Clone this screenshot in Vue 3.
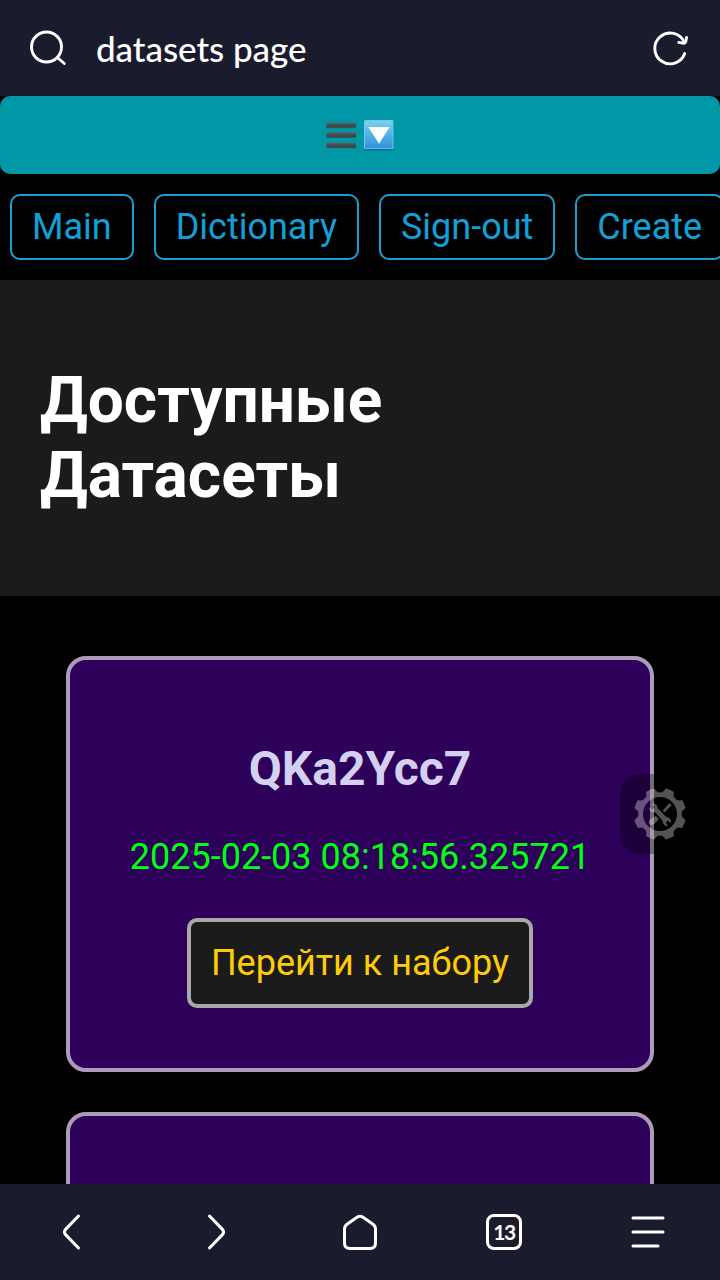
<script setup>
const links = ['Main', 'Dictionary', 'Sign-out', 'Create']
const teeth = Array.from({ length: 8 }, (_, i) => 22.5 + i * 45)
</script>

<template>
  <div class="screen">
    <header class="address">
      <svg class="search" viewBox="0 0 40 40" width="40" height="40">
        <circle cx="18.5" cy="19" r="15" />
        <path d="M30.5 30.5L36.3 35.5" />
      </svg>
      <span class="page-name">datasets page</span>
      <svg class="reload" viewBox="0 0 40 40" width="40" height="40">
        <path d="M34.7 25.6A15.4 15.4 0 1 1 34.2 14" />
        <path d="M28.8 14.4L33.8 15.2Q35.2 15.3 35.7 13.8L36.6 9.4" />
      </svg>
    </header>

    <main class="content">
      <div class="toggle">
        <svg viewBox="0 0 70 34" width="70" height="34">
          <defs>
            <linearGradient id="bar" x1="0" y1="0" x2="0" y2="1">
              <stop offset="0" stop-color="#56696d" />
              <stop offset=".3" stop-color="#465458" />
              <stop offset=".75" stop-color="#37464a" />
              <stop offset="1" stop-color="#3f5c60" />
            </linearGradient>
            <linearGradient id="tile" x1="0" y1="0" x2="0" y2="1">
              <stop offset="0" stop-color="#76d0ee" />
              <stop offset="1" stop-color="#2f93da" />
            </linearGradient>
          </defs>
          <rect x="1.5" y="4.7" width="29.5" height="5.5" rx=".8" fill="url(#bar)" />
          <rect x="1.5" y="14.2" width="29.5" height="5.7" rx=".8" fill="url(#bar)" />
          <rect x="1.5" y="24.7" width="29.5" height="5.5" rx=".8" fill="url(#bar)" />
          <rect x="39" y="3" width="29.5" height="29.3" rx="1.5" fill="#17679d" />
          <rect x="39" y="2" width="29.5" height="29" rx="1.5" fill="#73c8ec" />
          <rect x="40" y="3.2" width="27.5" height="27" rx="1" fill="url(#tile)" />
          <path d="M43.3 9H64.7L54 25.8Z" fill="#fff" />
        </svg>
      </div>

      <nav class="links">
        <a v-for="link in links" :key="link" class="link">{{ link }}</a>
      </nav>

      <section class="hero">
        <h1>Доступные<br>Датасеты</h1>
      </section>

      <section class="cards">
        <article class="card">
          <h2>QKa2Ycc7</h2>
          <p>2025-02-03 08:18:56.325721</p>
          <button class="open">Перейти к набору</button>
        </article>
        <article class="card"></article>
      </section>
    </main>

    <footer class="toolbar">
      <svg class="tool" viewBox="0 0 40 40">
        <path d="M26.5 4L13.3 17.6Q11.5 20 13.3 22.4L26.5 36" />
      </svg>
      <svg class="tool" viewBox="0 0 40 40">
        <path d="M13.5 4L26.7 17.6Q28.5 20 26.7 22.4L13.5 36" />
      </svg>
      <svg class="tool" viewBox="0 0 40 40">
        <path d="M17 5.2Q20 3.2 23 5.2L33 12.2Q35.5 14 35.5 17V31Q35.5 36.5 30 36.5H10Q4.5 36.5 4.5 31V17Q4.5 14 7 12.2Z" />
      </svg>
      <div class="tool tabs">13</div>
      <svg class="tool" viewBox="0 0 40 40">
        <path d="M5 6H35M5 20H35M5 34H30" />
      </svg>
    </footer>

    <div class="floating">
      <svg viewBox="-30 -30 60 60" width="60" height="60">
        <mask id="wrench-gap" maskUnits="userSpaceOnUse" x="-30" y="-30" width="60" height="60">
          <rect x="-30" y="-30" width="60" height="60" fill="#fff" />
          <path d="M-6-5L6 7" stroke="#000" stroke-width="7" />
        </mask>
        <g class="gear">
          <path v-for="angle in teeth" :key="angle" d="M-6.8-20.6Q-4.8-22-4.5-25.8Q0-26.6 4.5-25.8Q4.8-22 6.8-20.6Z" :transform="`rotate(${angle})`" />
          <circle r="19.4" fill="none" stroke="#fff" stroke-width="4.8" />
          <g mask="url(#wrench-gap)">
            <path d="M2.6-3.2L9.3-10.8L11.7-8.8L4.7-1.8Z" />
            <path d="M-3.5 1.5L-10.6 5.8Q-12.5 11-8.5 11.2Q-5.2 10.5-1 5Z" />
          </g>
          <path d="M-11-6.4Q-10.5-1.8-7-1.4L-4.8-1.8L2.6 6.7Q2.8 12 8 12.3L5.8 8.8L7.8 6.6L11.2 8.9Q11.2 3.6 6.2 3L-2.4-5.8Q-2.4-10.8-8.4-10.6L-5.2-7.1L-7.6-4.5Z" />
        </g>
      </svg>
    </div>
  </div>
</template>

<style>
body { background: #000; }
</style>

<style scoped>
.screen {
  position: relative;
  display: flex;
  flex-direction: column;
  width: 720px;
  height: 1280px;
  overflow: hidden;
  background: #000;
  font-family: Roboto, "Liberation Sans", sans-serif;
}
.address {
  flex: none;
  box-sizing: border-box;
  height: 96px;
  padding: 0 30px 0 28px;
  display: flex;
  align-items: center;
  background: #1b1b2e;
  color: #fff;
}
.search, .reload {
  fill: none;
  stroke: #fff;
  stroke-width: 2.9;
  stroke-linecap: round;
  stroke-linejoin: round;
}
.page-name {
  margin: 0 auto 0 28px;
  font: 500 35px/40px Lato, "Open Sans", sans-serif;
  letter-spacing: -0.05px;
}
.content {
  flex: 1;
  min-height: 0;
  overflow: hidden;
}
.toggle {
  height: 78px;
  display: flex;
  align-items: center;
  justify-content: center;
  border-radius: 10px;
  background: #0097a7;
}
.links {
  display: flex;
  gap: 20px;
  padding: 20px 10px;
}
.link {
  flex: none;
  padding: 10px 20px;
  border: 2px solid #1b9fd0;
  border-radius: 10px;
  color: #11a0d7;
  font-size: 36px;
  line-height: 42px;
}
.hero {
  box-sizing: border-box;
  height: 316px;
  padding: 83px 40px;
  background: #1b1b1b;
  color: #fff;
}
h1 {
  margin: 0;
  font-size: 64px;
  line-height: 75px;
}
.cards {
  display: flex;
  flex-direction: column;
  align-items: center;
  gap: 40px;
  padding-top: 60px;
}
.card {
  flex: none;
  box-sizing: border-box;
  width: 588px;
  height: 416px;
  padding-top: 80px;
  border: 4px solid #ac9bb9;
  border-radius: 20px;
  display: flex;
  flex-direction: column;
  align-items: center;
  background: #2d0059;
}
h2 {
  margin: 0;
  color: #d3d0f0;
  font-size: 48px;
  line-height: 57px;
}
p {
  margin: 39px 0 40px;
  color: #0f1;
  font-size: 36px;
  line-height: 42px;
}
.open {
  padding: 20px;
  border: 4px solid #a9a9a9;
  border-radius: 10px;
  background: #1b1b1b;
  color: #ffcc08;
  font: 36px/42px Roboto, sans-serif;
}
.toolbar {
  flex: none;
  height: 96px;
  display: grid;
  grid-template-columns: repeat(5, 1fr);
  place-items: center;
  background: #1b1b2e;
}
.tool {
  width: 40px;
  height: 40px;
  fill: none;
  stroke: #fff;
  stroke-width: 3;
  stroke-linecap: round;
  stroke-linejoin: round;
}
.tabs {
  box-sizing: border-box;
  width: 36px;
  height: 36px;
  border: 3px solid #fff;
  border-radius: 8px;
  color: #fff;
  font: 700 21px/30px Lato, sans-serif;
  letter-spacing: -1.5px;
  text-align: center;
}
.floating {
  position: absolute;
  top: 774px;
  right: 0;
  box-sizing: border-box;
  width: 100px;
  height: 80px;
  padding: 10px;
  border-radius: 20px 0 0 20px;
  background: rgba(0, 0, 0, 0.32);
}
.gear {
  fill: #fff;
  opacity: 0.33;
}
</style>
